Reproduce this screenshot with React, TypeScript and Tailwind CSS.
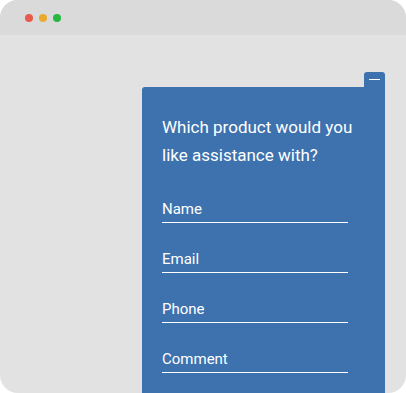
export default function App() {
  const fields = ["Name", "Email", "Phone", "Comment"];
  return (
    <div className="w-[406px] h-[393px] bg-white" style={{ fontFamily: "Roboto, sans-serif" }}>
      <div className="w-full h-full rounded-[18px] overflow-hidden bg-[#e2e2e2] flex flex-col">
        {/* title bar */}
        <div className="h-[35px] shrink-0 bg-[#dadada] flex items-center gap-[6px] pl-[25px]">
          <span className="w-[8px] h-[8px] rounded-full bg-[#e85a4f]" />
          <span className="w-[8px] h-[8px] rounded-full bg-[#e9ab2e]" />
          <span className="w-[8px] h-[8px] rounded-full bg-[#27b83f]" />
        </div>

        {/* chat widget */}
        <div className="flex-1 pt-[37px] pl-[142px]">
          <div className="w-[243px] h-full flex flex-col">
            <div className="self-end w-[21px] h-[15px] rounded-t-[3px] bg-[#3d72ae] flex justify-center pt-[7px]">
              <span className="w-[11px] h-px bg-white" />
            </div>
            <div className="flex-1 bg-[#3d72ae] rounded-tl-[3px] pl-[20px] pt-[26px]">
              <h2 className="text-[17px] leading-[28px] text-white font-normal">
                Which product would you
                <br />
                like assistance with?
              </h2>
              <div className="mt-[30px] flex flex-col gap-[26px]">
                {fields.map((f) => (
                  <div key={f} className="w-[186px]">
                    <div className="text-[15px] leading-[20px] text-white">{f}</div>
                    <div className="mt-[3px] h-px bg-white" />
                  </div>
                ))}
              </div>
            </div>
          </div>
        </div>
      </div>
    </div>
  );
}
